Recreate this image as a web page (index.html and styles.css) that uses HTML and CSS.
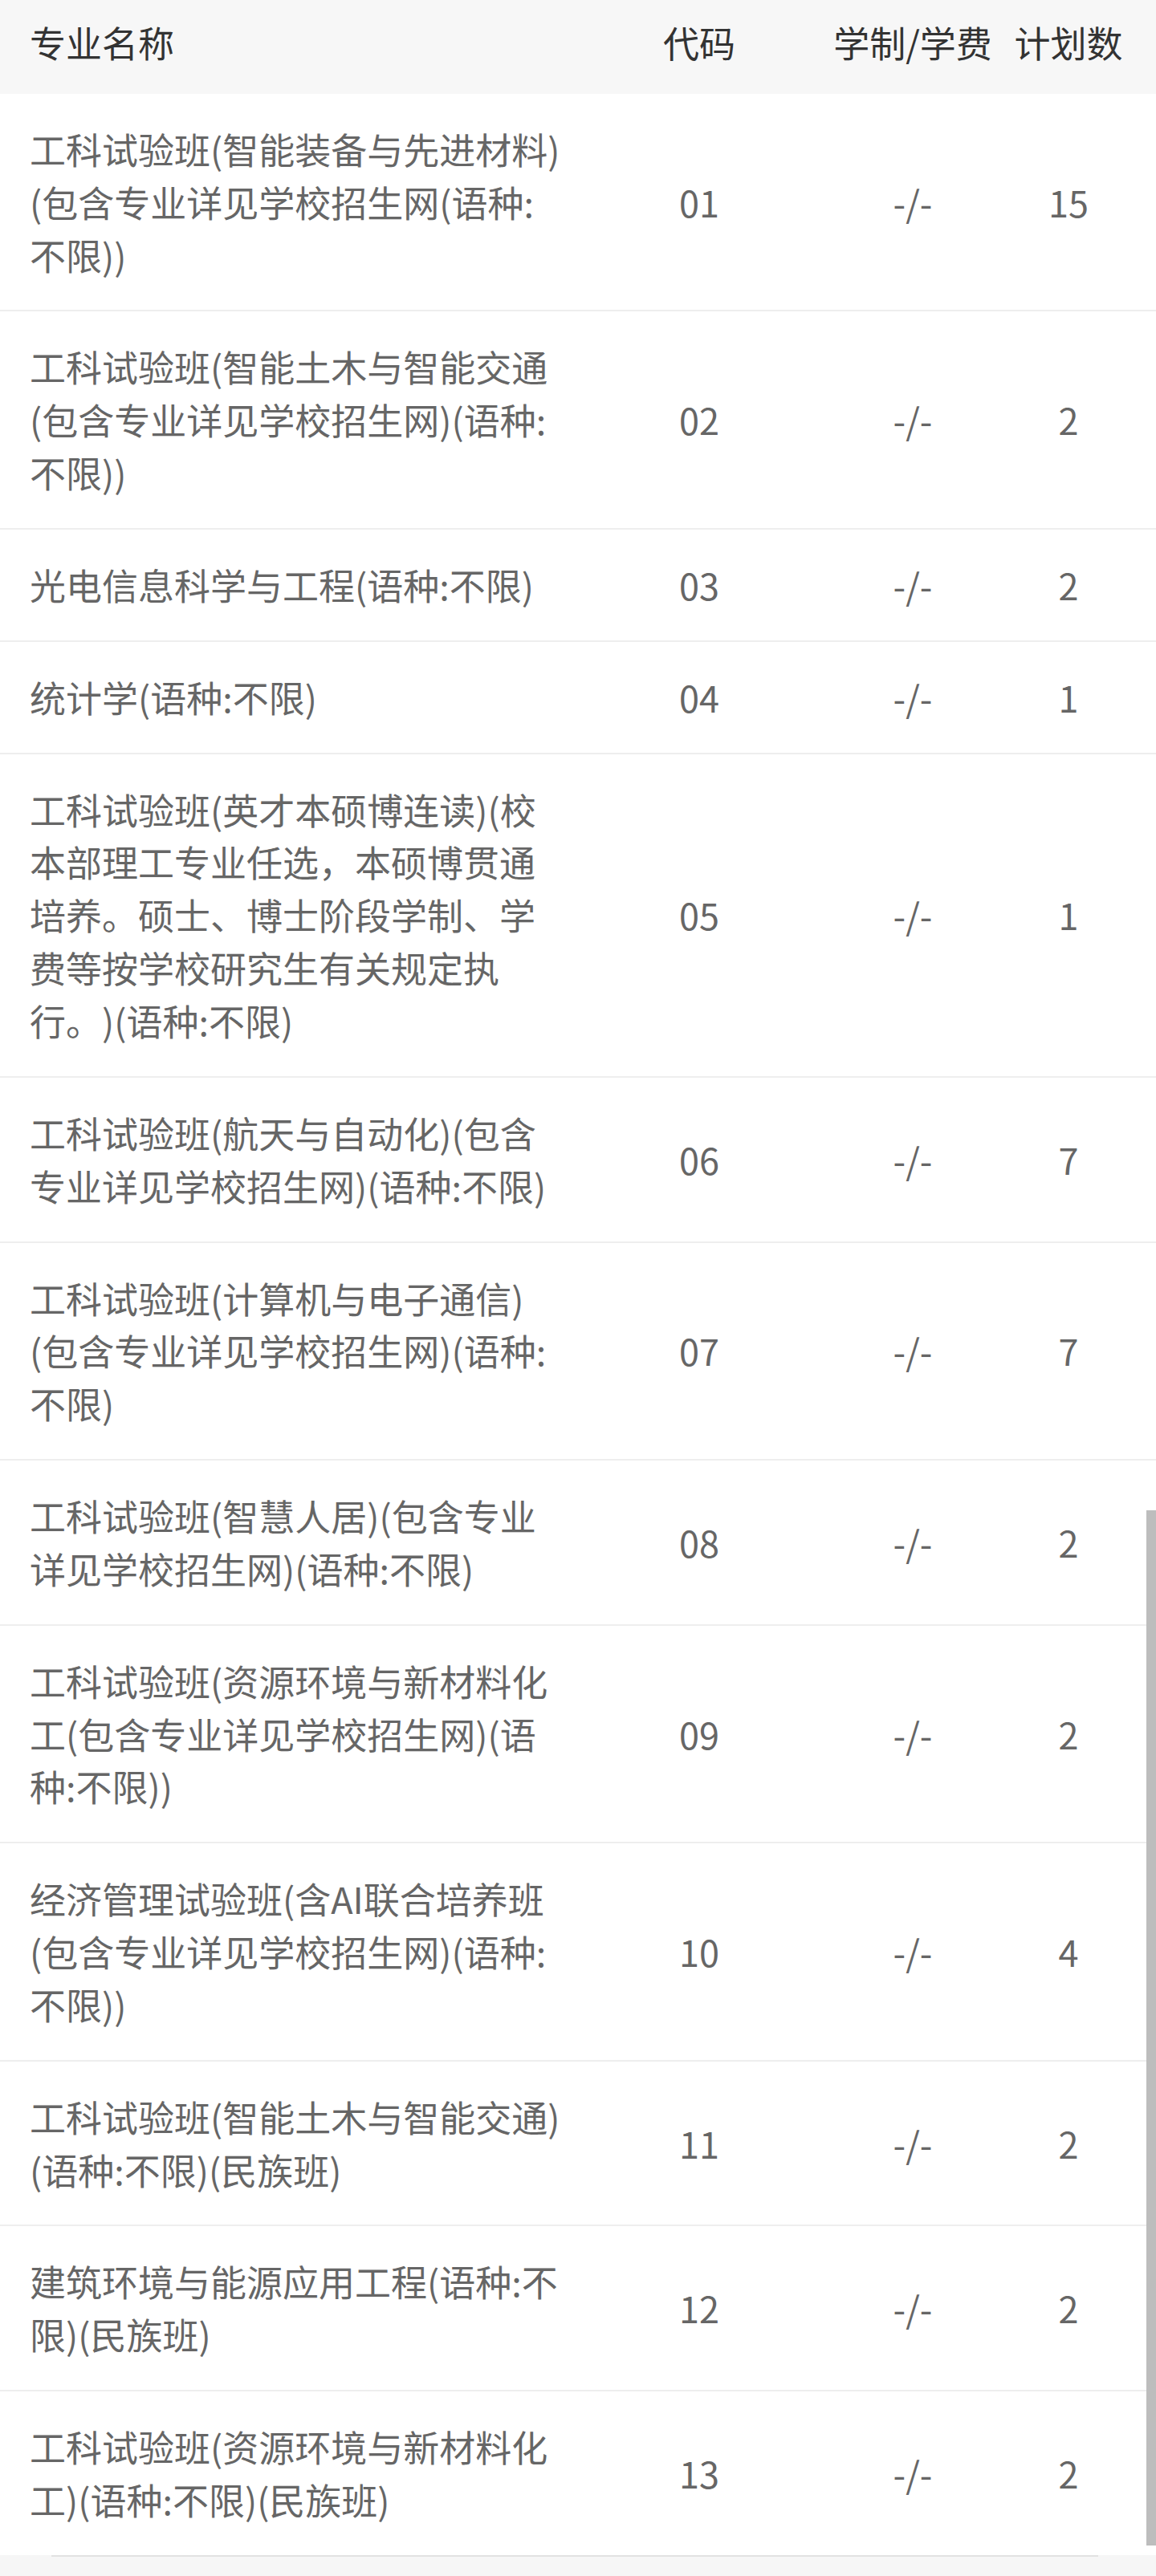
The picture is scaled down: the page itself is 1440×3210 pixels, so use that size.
FILE: index.html
```html
<!DOCTYPE html>
<html lang="zh-CN">
<head>
<meta charset="utf-8">
<title>专业计划</title>
<link rel="stylesheet" href="styles.css">
</head>
<body>
<div class="page">
  <div class="table">
    <div class="row head">
      <div class="cell name">专业名称</div>
      <div class="cell num">代码</div>
      <div class="cell num">学制/学费</div>
      <div class="cell num">计划数</div>
    </div>
    <div class="row">
      <div class="cell name">工科试验班(智能装备与先进材料)(包含专业详见学校招生网(语种:不限))</div>
      <div class="cell num">01</div>
      <div class="cell num">-/-</div>
      <div class="cell num">15</div>
    </div>
    <div class="row">
      <div class="cell name">工科试验班(智能土木与智能交通(包含专业详见学校招生网)(语种:不限))</div>
      <div class="cell num">02</div>
      <div class="cell num">-/-</div>
      <div class="cell num">2</div>
    </div>
    <div class="row">
      <div class="cell name">光电信息科学与工程(语种:不限)</div>
      <div class="cell num">03</div>
      <div class="cell num">-/-</div>
      <div class="cell num">2</div>
    </div>
    <div class="row">
      <div class="cell name">统计学(语种:不限)</div>
      <div class="cell num">04</div>
      <div class="cell num">-/-</div>
      <div class="cell num">1</div>
    </div>
    <div class="row">
      <div class="cell name">工科试验班(英才本硕博连读)(校本部理工专业任选，本硕博贯通培养。硕士、博士阶段学制、学费等按学校研究生有关规定执行。)(语种:不限)</div>
      <div class="cell num">05</div>
      <div class="cell num">-/-</div>
      <div class="cell num">1</div>
    </div>
    <div class="row">
      <div class="cell name">工科试验班(航天与自动化)(包含专业详见学校招生网)(语种:不限)</div>
      <div class="cell num">06</div>
      <div class="cell num">-/-</div>
      <div class="cell num">7</div>
    </div>
    <div class="row">
      <div class="cell name">工科试验班(计算机与电子通信)(包含专业详见学校招生网)(语种:不限)</div>
      <div class="cell num">07</div>
      <div class="cell num">-/-</div>
      <div class="cell num">7</div>
    </div>
    <div class="row">
      <div class="cell name">工科试验班(智慧人居)(包含专业详见学校招生网)(语种:不限)</div>
      <div class="cell num">08</div>
      <div class="cell num">-/-</div>
      <div class="cell num">2</div>
    </div>
    <div class="row">
      <div class="cell name">工科试验班(资源环境与新材料化工(包含专业详见学校招生网)(语种:不限))</div>
      <div class="cell num">09</div>
      <div class="cell num">-/-</div>
      <div class="cell num">2</div>
    </div>
    <div class="row">
      <div class="cell name">经济管理试验班(含AI联合培养班(包含专业详见学校招生网)(语种:不限))</div>
      <div class="cell num">10</div>
      <div class="cell num">-/-</div>
      <div class="cell num">4</div>
    </div>
    <div class="row">
      <div class="cell name">工科试验班(智能土木与智能交通)(语种:不限)(民族班)</div>
      <div class="cell num">11</div>
      <div class="cell num">-/-</div>
      <div class="cell num">2</div>
    </div>
    <div class="row">
      <div class="cell name">建筑环境与能源应用工程(语种:不限)(民族班)</div>
      <div class="cell num">12</div>
      <div class="cell num">-/-</div>
      <div class="cell num">2</div>
    </div>
    <div class="row last">
      <div class="cell name">工科试验班(资源环境与新材料化工)(语种:不限)(民族班)</div>
      <div class="cell num">13</div>
      <div class="cell num">-/-</div>
      <div class="cell num">2</div>
    </div>
  </div>
  <div class="footer"><div class="footer-line"></div></div>
  <div class="scrollbar"></div>
</div>
</body>
</html>
```

FILE: styles.css
```css
html, body {
  margin: 0;
  padding: 0;
  background: #ffffff;
}
body {
  font-family: "Noto Sans CJK SC", "Noto Sans", sans-serif;
  font-size: 45px;
  line-height: 65.85px;
  color: #666666;
  text-spacing-trim: space-all;
}
.page {
  position: relative;
  width: 1440px;
  height: 3210px;
  overflow: hidden;
  display: flex;
  flex-direction: column;
}
.table {
  display: flex;
  flex-direction: column;
}
.row {
  display: grid;
  grid-template-columns: 740px 262px 270px 118px;
  padding-right: 50px;
  border-bottom: 2px solid #eeeeee;
}
.row.head {
  background: #f7f7f7;
  color: #333333;
  border-bottom: none;
}
.row.last {
  border-bottom: none;
}
.cell {
  padding: 36px 0;
}
.head .cell {
  padding: 20px 0 31px;
}
.cell.name {
  padding-left: 37px;
  padding-right: 37px;
}
.cell.num {
  display: flex;
  align-items: center;
  justify-content: center;
  white-space: nowrap;
}
.footer {
  flex: 1;
  background: #f6f6f6;
}
.footer-line {
  height: 2px;
  margin: 0 72px 0 64px;
  background: #e2e2e2;
}
.scrollbar {
  position: absolute;
  right: 0;
  top: 1882px;
  width: 12px;
  height: 1290px;
  background: #bdbdbd;
}
```
